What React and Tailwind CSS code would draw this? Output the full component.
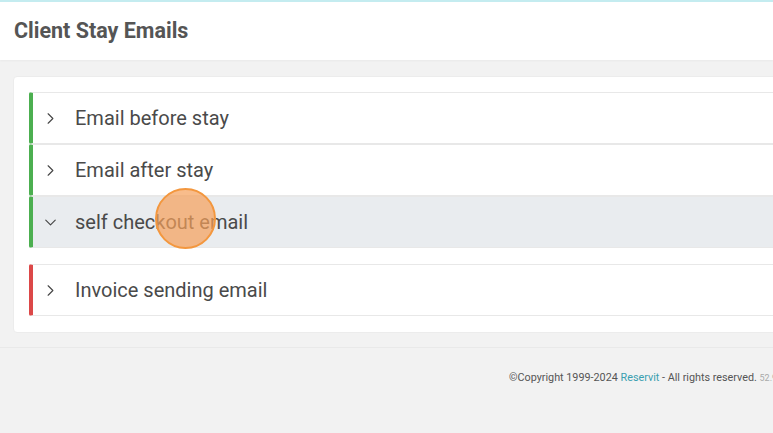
import { ChevronRight, ChevronDown } from 'lucide-react';

const rows = [
  { title: 'Email before stay', color: 'border-l-[#4caf50]', open: false },
  { title: 'Email after stay', color: 'border-l-[#4caf50]', open: false },
  { title: 'self checkout email', color: 'border-l-[#4caf50]', open: true },
  { title: 'Invoice sending email', color: 'border-l-[#dc4848]', open: false },
];

const App = () => {
  return (
    <div className="relative w-[773px] h-[433px] overflow-hidden bg-[#f2f2f2] font-['Roboto',sans-serif]">
      {/* Header */}
      <div className="h-[2px] bg-[#c4ecf0]" />
      <header className="h-[58px] bg-white flex items-center px-[14px] shadow-[0_1px_2px_rgba(0,0,0,0.04)]">
        <h1 className="text-[21.5px] font-bold text-[#555555]">Client Stay Emails</h1>
      </header>

      {/* Content */}
      <main className="pt-[16px] pl-[13px]">
        <div className="w-[820px] bg-white rounded-[4px] border border-[#ececec] pt-[15px] pl-[15px] pb-[16px]">
          {rows.map((row) => (
            <div key={row.title} className={row.open ? 'mb-[16px]' : ''}>
              <div
                className={`h-[52px] flex items-center border border-[#e8e8e8] border-l-4 ${row.color} rounded-l-[2px] ${row.open ? 'bg-[#e9ecef]' : 'bg-white'}`}
              >
                <div className="w-[34px] flex justify-center">
                  {row.open ? (
                    <ChevronDown size={19} strokeWidth={1.4} className="text-[#444]" />
                  ) : (
                    <ChevronRight size={19} strokeWidth={1.4} className="text-[#444]" />
                  )}
                </div>
                <span className="ml-[8px] text-[20px] text-[#4a4a4a]">{row.title}</span>
              </div>
            </div>
          ))}
        </div>
      </main>

      {/* Footer */}
      <footer className="mt-[14px] border-t border-[#e9e9e9] h-[80px] flex items-center pl-[509px] pb-[18px] whitespace-nowrap">
        <p className="text-[10.8px] text-[#555]">
          ©Copyright 1999-2024 <span className="text-[#3a9fb0]">Reservit</span> - All rights reserved.{' '}
          <span className="text-[9px] text-[#aaa]">52.9.0</span>
        </p>
      </footer>

      {/* Click indicator */}
      <div className="absolute left-[155px] top-[188px] w-[61px] h-[61px] rounded-full bg-[rgba(245,160,90,0.7)] border-2 border-[#f3973e]" />
    </div>
  );
};

export default App;
